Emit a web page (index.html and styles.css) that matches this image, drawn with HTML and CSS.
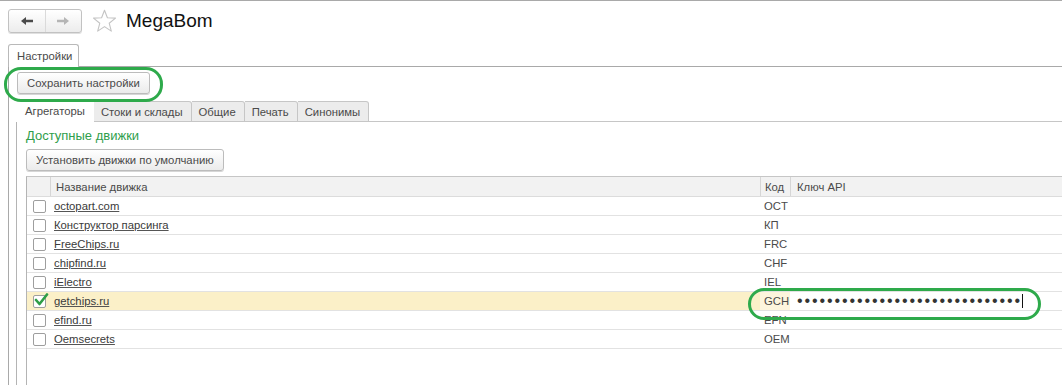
FILE: index.html
```html
<!DOCTYPE html>
<html lang="ru">
<head>
<meta charset="utf-8">
<title>MegaBom</title>
<link rel="stylesheet" href="styles.css">
</head>
<body>
<div class="app">
  <div class="header">
    <div class="nav">
      <span class="nav-btn">
        <svg width="14" height="10" viewBox="0 0 14 10"><path d="M1 5 L6 1 L6 3.8 L13 3.8 L13 6.2 L6 6.2 L6 9 Z" fill="#4a4a4a"/></svg>
      </span>
      <span class="nav-btn">
        <svg width="14" height="10" viewBox="0 0 14 10"><path d="M13 5 L8 1 L8 3.8 L1 3.8 L1 6.2 L8 6.2 L8 9 Z" fill="#b5b5b5"/></svg>
      </span>
    </div>
    <svg class="star" width="25" height="24" viewBox="0 0 25 24"><path d="M12.5 1.2 L15.4 8.7 L23.5 9.1 L17.2 14.2 L19.3 22.1 L12.5 17.6 L5.7 22.1 L7.8 14.2 L1.5 9.1 L9.6 8.7 Z" fill="none" stroke="#c4c4c4" stroke-width="1.1" stroke-linejoin="round"/></svg>
    <h1 class="title">MegaBom</h1>
  </div>

  <div class="form-tabs">
    <div class="tab">Настройки</div>
  </div>
  <div class="form-panel">
    <div class="toolbar">
      <button class="btn">Сохранить настройки</button>
    </div>
    <div class="inner-tabs">
      <div class="itab active">Агрегаторы</div>
      <div class="itab">Стоки и склады</div>
      <div class="itab">Общие</div>
      <div class="itab">Печать</div>
      <div class="itab">Синонимы</div>
      <div class="itab-fill"></div>
    </div>
    <div class="inner-panel">
      <div class="group-title">Доступные движки</div>
      <button class="btn btn-default">Установить движки по умолчанию</button>
      <div class="grid">
        <div class="row head">
          <div class="c-check"></div>
          <div class="c-name">Название движка</div>
          <div class="c-code">Код</div>
          <div class="c-key">Ключ API</div>
        </div>
        <div class="row"><div class="c-check"><span class="cb"></span></div><div class="c-name"><a>octopart.com</a></div><div class="c-code">OCT</div><div class="c-key"></div></div>
        <div class="row"><div class="c-check"><span class="cb"></span></div><div class="c-name"><a>Конструктор парсинга</a></div><div class="c-code">КП</div><div class="c-key"></div></div>
        <div class="row"><div class="c-check"><span class="cb"></span></div><div class="c-name"><a>FreeChips.ru</a></div><div class="c-code">FRC</div><div class="c-key"></div></div>
        <div class="row"><div class="c-check"><span class="cb"></span></div><div class="c-name"><a>chipfind.ru</a></div><div class="c-code">CHF</div><div class="c-key"></div></div>
        <div class="row"><div class="c-check"><span class="cb"></span></div><div class="c-name"><a>iElectro</a></div><div class="c-code">IEL</div><div class="c-key"></div></div>
        <div class="row selected"><div class="c-check"><span class="cb checked"><svg width="15" height="14" viewBox="0 0 15 14"><path d="M2 7 L5.5 11 L13 1.5" fill="none" stroke="#2e9e47" stroke-width="2.6" stroke-linecap="round" stroke-linejoin="round"/></svg></span></div><div class="c-name"><a>getchips.ru</a></div><div class="c-code">GCH</div><div class="c-key editing"><span class="dots">••••••••••••••••••••••••••••••</span><span class="caret"></span></div></div>
        <div class="row"><div class="c-check"><span class="cb"></span></div><div class="c-name"><a>efind.ru</a></div><div class="c-code">EFN</div><div class="c-key"></div></div>
        <div class="row"><div class="c-check"><span class="cb"></span></div><div class="c-name"><a>Oemsecrets</a></div><div class="c-code">OEM</div><div class="c-key"></div></div>
      </div>
    </div>
  </div>

  <div class="mark mark-save"></div>
  <div class="mark mark-key"></div>
</div>
</body>
</html>
```

FILE: styles.css
```css
* { box-sizing: border-box; }
html, body { margin: 0; padding: 0; background: #fff; }
body {
  font-family: "Liberation Sans", Arial, sans-serif;
  font-size: 11.3px;
  color: #4a4a4a;
  height: 385px;
  overflow: hidden;
}
.app {
  position: relative;
  height: 385px;
  border-top: 1px solid #a9a9a9;
  display: flex;
  flex-direction: column;
}
.header {
  display: flex;
  align-items: center;
  height: 42px;
  padding: 0 0 2px 8px;
}
.nav {
  display: flex;
  width: 74px;
  height: 24px;
  border: 1px solid #c2c2c2;
  border-radius: 3px;
  background: linear-gradient(#ffffff, #ececec);
  box-shadow: 0 1px 0 #e0e0e0;
}
.nav-btn {
  flex: 1;
  display: flex;
  align-items: center;
  justify-content: center;
}
.nav-btn + .nav-btn { border-left: 1px solid #dadada; }
.star { margin-left: 10px; }
.title {
  margin: 0 0 0 9px;
  font-weight: normal;
  font-size: 19px;
  color: #111;
  font-family: "Liberation Sans", Arial, sans-serif;
}
.form-tabs {
  display: flex;
  padding-left: 8px;
  height: 23px;
}
.tab {
  height: 23px;
  padding: 5px 6px 0 8px;
  border: 1px solid #b9b9b9;
  border-bottom: none;
  border-radius: 3px 3px 0 0;
  background: #fff;
  color: #4a4a4a;
  position: relative;
  top: 1px;
}
.form-panel {
  flex: 1;
  margin-left: 8px;
  border-top: 1px solid #a9a9a9;
  border-left: 1px solid #a9a9a9;
  display: flex;
  flex-direction: column;
}
.toolbar { padding: 5px 0 0 8px; height: 34px; }
.btn {
  font-family: "Liberation Sans", Arial, sans-serif;
  font-size: 11.3px;
  color: #4a4a4a;
  height: 22px;
  padding: 0 9px;
  border: 1px solid #bcbcbc;
  border-radius: 3px;
  background: linear-gradient(#ffffff, #ebebeb);
  box-shadow: 0 1px 0 #d6d6d6;
}
.inner-tabs {
  display: flex;
  margin-left: 7px;
  height: 21px;
}
.itab {
  padding: 4px 8px 0 7px;
  border: 1px solid #c6c6c6;
  border-left: none;
  border-radius: 0 3px 0 0;
  background: #ececec;
  color: #4a4a4a;
}
.itab.active {
  background: #fff;
  border: none;
  padding-left: 9px;
  padding-right: 9px;
}
.itab-fill { flex: 1; border-bottom: 1px solid #c6c6c6; }
.inner-panel {
  flex: 1;
  margin-left: 7px;
  border-left: 1px solid #b4b4b4;
  padding: 6px 0 0 9px;
  display: flex;
  flex-direction: column;
  align-items: flex-start;
}
.group-title {
  color: #2f9e4c;
  font-size: 13px;
  height: 21px;
}
.btn-default { padding: 0 9px; }
.grid {
  margin-top: 5px;
  align-self: stretch;
  flex: 1;
  border-top: 1px solid #c6c6c6;
  border-left: 1px solid #b4b4b4;
}
.row {
  display: grid;
  grid-template-columns: 23px 710px 30px 1fr;
  height: 19px;
  border-bottom: 1px solid #e2e2e2;
  align-items: stretch;
}
.row > div {
  display: flex;
  align-items: center;
  padding-left: 4px;
}
.row.head {
  height: 20px;
  background: #f2f2f2;
  border-bottom: 1px solid #dcdcdc;
}
.row.head > div + div { border-left: 1px solid #d6d6d6; }
.row.head .c-name { padding-left: 5px; }
.row.head .c-key { padding-left: 6px; }
.c-check { padding-left: 6px !important; }
.c-name { padding-left: 4px; }
.row .c-name a {
  color: #3a3a3a;
  text-decoration: underline;
  text-decoration-color: #555;
}
.row.selected { background: #fbf0c8; }
.row.selected .c-code { background: #fdf5dd; }
.row.selected .c-key { background: #fff; padding-left: 7px; }
.cb {
  display: inline-block;
  width: 13px;
  height: 13px;
  border: 1px solid #9e9e9e;
  border-radius: 2px;
  background: #fff;
  position: relative;
}
.cb.checked svg { position: absolute; left: 0; top: -3px; }
.dots {
  font-size: 16px;
  letter-spacing: 1.9px;
  color: #333;
  line-height: 1;
}
.caret {
  display: inline-block;
  width: 1px;
  height: 14px;
  background: #111;
  margin-left: 0;
}
.mark {
  position: absolute;
  border: 3px solid #2eaa4b;
  pointer-events: none;
}
.mark-save {
  left: 4px; top: 66px;
  width: 159px; height: 35px;
  border-radius: 17px / 17px;
}
.mark-key {
  left: 748px; top: 287px;
  width: 293px; height: 32px;
  border-radius: 16px;
}
```
